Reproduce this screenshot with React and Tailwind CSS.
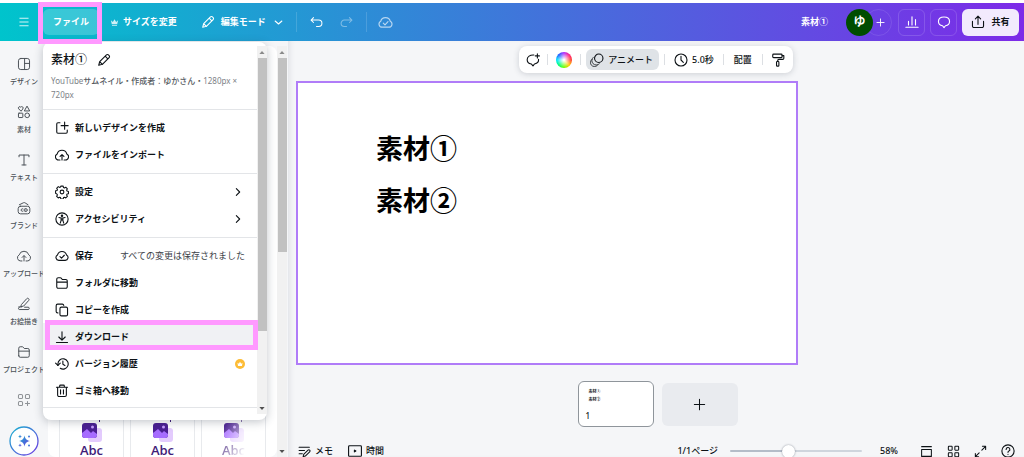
import { useState } from 'react';

function Icon({ children, className = 'size-[14px]', strokeWidth = 1.9 }) {
  return (
    <svg
      viewBox="0 0 24 24"
      fill="none"
      stroke="currentColor"
      strokeWidth={strokeWidth}
      strokeLinecap="round"
      strokeLinejoin="round"
      aria-hidden="true"
      className={`shrink-0 ${className}`}
    >
      {children}
    </svg>
  );
}

const cloud = 'M6.5 19.5a5 5 0 0 1-2.2-9.4 8 8 0 0 1 15.4 0 5 5 0 0 1-2.2 9.4z';

const icons = {
  pencil: <path d="M3 21l1.6-6.2L16.2 3.2a2.4 2.4 0 0 1 3.4 0l1.2 1.2a2.4 2.4 0 0 1 0 3.4L9.2 19.4zM14 5.5l4.5 4.5M4.6 14.8l4.6 4.6" />,
  cloudCheck: (
    <>
      <path d={cloud} />
      <path d="M8.5 13l2.7 2.7 4.8-5" />
    </>
  ),
  cloudUp: (
    <>
      <path d="M8.5 20.5h-2a5.500 5.500 0 0 1-2.700-10.400 8.500 8.500 0 0 1 16.400 0 5.500 5.500 0 0 1-2.700 10.400h-2" />
      <path d="M12 20.5v-8.500M8.7 14.5l3.3-3.3 3.3 3.3" />
    </>
  ),
  newDesign: <path d="M8.5 3H5a2 2 0 0 0-2 2v14a2 2 0 0 0 2 2h14a2 2 0 0 0 2-2v-3.500M16.500 2v12M10.500 8h12" />,
  gear: (
    <>
      <circle cx="12" cy="12" r="3.2" />
      <path d="M9.900 1.500h4.200l.6 2.600 1.700.7 2.300-1.400 2.900 2.900-1.400 2.300.7 1.700 2.600.6v4.200l-2.600.6-.7 1.700 1.400 2.300-2.900 2.900-2.300-1.400-1.700.7-.6 2.600H9.900l-.6-2.600-1.700-.7-2.300 1.400-2.900-2.900 1.400-2.300-.7-1.700L.5 14.100V9.900l2.600-.6.7-1.700-1.400-2.300 2.900-2.900 2.300 1.400 1.700-.7z" transform="translate(.5 .5) scale(.96)" />
    </>
  ),
  accessibility: (
    <>
      <circle cx="12" cy="12" r="10.500" />
      <circle cx="12" cy="6.500" r="1.200" fill="currentColor" />
      <path d="M6.800 9.500l3.700.8h3l3.700-.8M10.500 10.300v4L9 19M13.500 10.300v4L15 19M10.500 13.500h3" />
    </>
  ),
  folder: <path d="M3 18.500V5.500a2.500 2.500 0 0 1 2.500-2.500h3.600a2 2 0 0 1 1.500.7L12.500 6h6A2.500 2.500 0 0 1 21 8.500v10a2.500 2.500 0 0 1-2.500 2.500h-13A2.500 2.500 0 0 1 3 18.500zM3 10.500h18" />,
  copy: (
    <>
      <rect x="8.500" y="7" width="13" height="15" rx="2.500" />
      <path d="M5 17H4.500A2.500 2.500 0 0 1 2 14.500v-10A2.500 2.500 0 0 1 4.500 2h8A2.500 2.500 0 0 1 15 4" />
    </>
  ),
  download: <path d="M12 3v14M6.500 12l5.500 5.500 5.500-5.500M2.500 21.500h19" />,
  history: (
    <>
      <path d="M5 14.500V12a8.800 8.800 0 1 1 4 7.300" />
      <path d="M1 10.500l4 4 4-4M13.500 7v5.500l3.500 2" />
    </>
  ),
  trash: <path d="M2.500 5.500h19M8 5V3.500A1.500 1.500 0 0 1 9.500 2h5A1.500 1.500 0 0 1 16 3.500V5M4.500 6v13A2.500 2.500 0 0 0 7 21.500h10a2.500 2.500 0 0 0 2.500-2.500V6M9.500 10v7M14.500 10v7" />,
  right: <path d="M8 4l8 8-8 8" />,
  down: <path d="M3 8l9 8 9-8" />,
  design: (
    <>
      <rect x="2.500" y="2.500" width="19" height="19" rx="4" />
      <path d="M13 2.500v19M13 11h8.500" />
    </>
  ),
  elements: (
    <>
      <path d="M6.500 10.200L2.800 6.500a2.200 2.200 0 0 1 3.700-2.700 2.200 2.200 0 0 1 3.700 2.700z" />
      <path d="M17.500 2.500l4.300 7.700h-8.600z" />
      <rect x="2.500" y="14" width="7.500" height="7.500" rx="1" />
      <circle cx="17.500" cy="17.700" r="4" />
    </>
  ),
  text: <path d="M3.500 6.500V3.500h17v3M12 3.500v17M8.500 20.500h7" />,
  brand: (
    <>
      <rect x="2" y="9" width="20" height="13" rx="4" />
      <path d="M4 6.500l7-3.500a3 3 0 0 1 3 .3l5 3.200M10.500 13.700a2.200 2.200 0 1 0 0 3.600M14 13.300h1.500a2.200 2.200 0 0 1 0 4.400H14z" />
    </>
  ),
  draw: <path d="M8 12.500L16.500 3a2.300 2.300 0 0 1 3.500 3l-8.500 9.500-4.500 1zM3 17H8M4 17.500c-2 0-2 4 0 4h15a2 2 0 0 0 0-4h-6" />,
  apps: (
    <>
      <rect x="2.500" y="2.500" width="7" height="7" rx="2" />
      <rect x="14.500" y="2.500" width="7" height="7" rx="2" />
      <rect x="2.500" y="14.500" width="7" height="7" rx="2" />
      <path d="M18 14.500v7M14.500 18h7" />
    </>
  ),
  grid: (
    <>
      <rect x="2.500" y="2.500" width="7" height="7" rx="1" />
      <rect x="14.500" y="2.500" width="7" height="7" rx="1" />
      <rect x="2.500" y="14.500" width="7" height="7" rx="1" />
      <rect x="14.500" y="14.500" width="7" height="7" rx="1" />
    </>
  ),
  undo: <path d="M6.500 3L2 7.500 6.500 12M2.500 7.500H16a6 6 0 0 1 0 12h-4" />,
  redo: <path d="M17.500 3L22 7.500 17.500 12M21.500 7.500H8a6 6 0 0 0 0 12h4" />,
  menu: <path d="M2 3h20M2 12h20M2 21h20" />,
  chart: <path d="M1.500 21h21M6 17v-6M12 17V3M18 17V8" />,
  bubble: <path d="M12 3.500c5.500 0 9.500 3 9.500 7.500 0 4.200-3 6.800-7 7.400L12 21.500l-2.500-3.100c-4-.6-7-3.200-7-7.400 0-4.500 4-7.500 9.500-7.500z" />,
  addComment: <path d="M13.500 3.500C7 3 2 6.200 2 11.500c0 4 3 6.500 7 7.300l3 3.200 2.500-3.200c4.500-.8 7.500-4 7-8M19.500 1.500v7M16 5h7" />,
  share: <path d="M12 16V2.500M7.500 6.500L12 2l4.500 4.500M2.500 11v8a2.500 2.500 0 0 0 2.500 2.500h14a2.500 2.500 0 0 0 2.500-2.500v-8" />,
  plus: <path d="M12 2.500v19M2.500 12h19" />,
  animate: (
    <>
      <circle cx="15" cy="9" r="7.200" />
      <path d="M5.500 7.500a7.500 7.500 0 0 0 10.500 11M3 11a7 7 0 0 0 9.500 10.500" strokeWidth="1.300" />
    </>
  ),
  clock: (
    <>
      <circle cx="12" cy="12" r="10.300" />
      <path d="M12 5.500V12l4 4" />
    </>
  ),
  roller: (
    <>
      <rect x="3" y="2" width="16" height="6" rx="1.500" />
      <path d="M19 4.500h3V9a2 2 0 0 1-2 2h-6.500a2 2 0 0 0-2 2v1.500" />
      <rect x="9.500" y="14.500" width="4" height="8" rx="1.200" />
    </>
  ),
  memo: <path d="M2 4h19M2 10h10M2 16h6M9.500 21.500l1-4 8-8a2 2 0 0 1 3 3l-8 8z" />,
  play: (
    <>
      <rect x="1" y="3" width="22" height="18" rx="1.500" />
      <path d="M11 10.500l2.500 1.500-2.500 1.500z" fill="currentColor" />
    </>
  ),
  page: <path d="M3 3h18M3 8.500h18V21H3z" />,
  expand: <path d="M14.500 9.500L21.500 2.500M15.500 2.500h6v6M9.500 14.500l-7 7M2.500 15.500v6h6" />,
  help: (
    <>
      <circle cx="12" cy="12" r="10.500" />
      <path d="M8.800 9.300a3.200 3.200 0 1 1 4.700 2.800c-1 .5-1.500 1-1.500 2.200M12 17.500v.2" />
    </>
  ),
};

const navItems = [
  { icon: 'design', label: 'デザイン' },
  { icon: 'elements', label: '素材' },
  { icon: 'text', label: 'テキスト' },
  { icon: 'brand', label: 'ブランド' },
  { icon: 'cloudUp', label: 'アップロード' },
  { icon: 'draw', label: 'お絵描き' },
  { icon: 'folder', label: 'プロジェクト' },
];

const menuSections = [
  [
    { icon: 'newDesign', label: '新しいデザインを作成' },
    { icon: 'cloudUp', label: 'ファイルをインポート' },
  ],
  [
    { icon: 'gear', label: '設定', submenu: true },
    { icon: 'accessibility', label: 'アクセシビリティ', submenu: true },
  ],
  [
    { icon: 'cloudCheck', label: '保存', note: 'すべての変更は保存されました' },
    { icon: 'folder', label: 'フォルダに移動' },
    { icon: 'copy', label: 'コピーを作成' },
    { icon: 'download', label: 'ダウンロード', highlight: true },
    { icon: 'history', label: 'バージョン履歴', premium: true },
    { icon: 'trash', label: 'ゴミ箱へ移動' },
  ],
];

function Scrollbar({ thumb }) {
  return (
    <div className="flex w-[10px] shrink-0 flex-col items-center justify-between bg-[#f1f1f1]" aria-hidden="true">
      <div className="flex w-full flex-1 flex-col items-center">
        <svg viewBox="0 0 10 12" className="h-3 w-[10px] shrink-0 fill-[#8a8a8a]">
          <path d="M5 5l2.600 3H2.400z" />
        </svg>
        <div className={`w-[9px] bg-[#c1c1c1] ${thumb}`} />
      </div>
      <svg viewBox="0 0 10 12" className="h-3 w-[10px] shrink-0 fill-[#505050]">
        <path d="M5 8L2.400 5h5.200z" />
      </svg>
    </div>
  );
}

function MenuItem({ item }) {
  return (
    <button
      type="button"
      className={`relative flex h-[27px] w-full items-center gap-1.5 px-3 text-[9px] font-bold ${item.highlight ? 'bg-[#f0f1f4]' : ''}`}
    >
      <Icon>{icons[item.icon]}</Icon>
      <span>{item.label}</span>
      {item.note && <span className="ml-auto font-normal text-[#3c4248]">{item.note}</span>}
      {item.submenu && <Icon className="ml-auto mr-0.5 size-[10px]" strokeWidth={2.6}>{icons.right}</Icon>}
      {item.premium && (
        <svg viewBox="0 0 10 10" className="ml-auto size-[10px]" aria-hidden="true">
          <circle cx="5" cy="5" r="5" fill="#fdbc35" />
          <path d="M2.500 3.800l1.300 1L5 2.800l1.200 2 1.300-1L7 7H3z" fill="#fff" />
        </svg>
      )}
      {item.highlight && (
        <span className="absolute -right-px -top-[3px] bottom-0 left-0.5 border-[5px] border-[#ff99ff]" />
      )}
    </button>
  );
}

function FileMenu() {
  return (
    <div className="absolute left-0 top-[33px] z-20 flex w-[224px] rounded-lg bg-white pb-1.5 pt-1 text-[#0d1216] shadow-[0_2px_10px_rgba(40,50,70,0.28)]">
      <div className="flex-1 pb-1.5">
        <div className="px-2 pb-[7px] pt-1.5">
          <div className="flex items-center gap-2.5">
            <h2 className="text-[12px] font-medium leading-4">素材①</h2>
            <button type="button" aria-label="名前を変更">
              <Icon>{icons.pencil}</Icon>
            </button>
          </div>
          <p className="mt-1.5 text-[8px] font-normal leading-[14px] text-[#7d8287]">
            <span>YouTube</span>
            <span className="font-medium text-[#54595e]">サムネイル・作成者：ゆかさん・</span>
            <span>1280px ×</span> <span>720px</span>
          </p>
        </div>
        {menuSections.map((section, i) => (
          <div key={i} className="border-t border-[#e3e5e8] pb-[5px] pt-1">
            {section.map((item) => (
              <MenuItem key={item.label} item={item} />
            ))}
          </div>
        ))}
        <hr className="-mt-0.5 border-[#e3e5e8]" />
      </div>
      <Scrollbar thumb="h-[273px]" />
    </div>
  );
}

function Header() {
  return (
    <header className="mt-[3px] flex h-[38px] shrink-0 items-center bg-linear-to-r/srgb from-[#00c4cc] to-[#7d2ae8] pr-[5px] text-[9px] font-bold text-white">
      <button type="button" aria-label="メニュー" className="flex w-[43px] justify-center pl-1">
        <Icon className="size-[10px]" strokeWidth={2}>{icons.menu}</Icon>
      </button>
      <div className="relative">
        <button type="button" className="h-[26px] w-[56px] rounded-md bg-white/20">ファイル</button>
        <FileMenu />
        <div className="pointer-events-none absolute -bottom-[9px] -left-[5px] -right-[3px] -top-[7px] z-30 border-[5px] border-[#ff99ff]" />
      </div>
      <button type="button" className="ml-[11px] flex items-center gap-1">
        <svg viewBox="0 0 10 10" className="size-[9px] fill-white/80" aria-hidden="true">
          <path d="M1 2.500l2.200 2L5 1.500l1.800 3 2.200-2L8 7H2zM2.200 8h5.600v1H2.200z" />
        </svg>
        サイズを変更
      </button>
      <button type="button" className="ml-6 flex items-center gap-1.5">
        <Icon>{icons.pencil}</Icon>
        編集モード
        <Icon className="ml-0.5 size-[9px]" strokeWidth={2.8}>{icons.down}</Icon>
      </button>
      <span className="ml-[13px] h-5 w-px bg-white/15" />
      <button type="button" aria-label="元に戻す" className="ml-[13px]"><Icon className="size-[13px]">{icons.undo}</Icon></button>
      <button type="button" aria-label="やり直す" className="ml-[17px] opacity-40"><Icon className="size-[13px]">{icons.redo}</Icon></button>
      <span className="ml-[13px] h-5 w-px bg-white/15" />
      <button type="button" aria-label="保存状態" className="ml-[11px] opacity-65"><Icon className="size-[15px]">{icons.cloudCheck}</Icon></button>

      <span className="ml-auto mr-[18px]">素材①</span>
      <div className="z-10 flex size-[27px] items-center justify-center rounded-full bg-[#004d00] text-[12px]">ゆ</div>
      <button type="button" aria-label="メンバーを追加" className="-ml-2 mr-1.5 flex size-[27px] items-center justify-center rounded-full border border-white/10 pl-1">
        <Icon className="size-[9px]" strokeWidth={2.4}>{icons.plus}</Icon>
      </button>
      <div className="flex gap-[5px]">
        <button type="button" aria-label="分析" className="flex size-[27px] items-center justify-center rounded-md border border-white/15">
          <Icon>{icons.chart}</Icon>
        </button>
        <button type="button" aria-label="コメント" className="flex size-[27px] items-center justify-center rounded-md border border-white/15">
          <Icon>{icons.bubble}</Icon>
        </button>
        <button type="button" className="flex h-[27px] w-[57px] items-center justify-center gap-1.5 rounded-md bg-[#f2eafd] text-[#0d1216]">
          <Icon>{icons.share}</Icon>
          共有
        </button>
      </div>
    </header>
  );
}

function SideNav() {
  return (
    <nav className="flex w-12 shrink-0 flex-col items-center pt-4 text-[#4b5157]">
      {navItems.map((item) => (
        <button key={item.label} type="button" className="flex h-12 w-full shrink-0 flex-col items-center gap-1.5 whitespace-nowrap text-[7px] font-medium leading-[10px]">
          <Icon strokeWidth={1.7}>{icons[item.icon]}</Icon>
          {item.label}
        </button>
      ))}
      <button type="button" aria-label="アプリ" className="flex h-[33px] shrink-0 items-start opacity-60">
        <Icon strokeWidth={1.8}>{icons.apps}</Icon>
      </button>
      <button type="button" aria-label="AIアシスタント" className="shrink-0">
        <svg viewBox="0 0 30 30" className="size-[30px]" aria-hidden="true">
          <defs>
            <linearGradient id="ai" x1="0" y1="0" x2="1" y2="1">
              <stop offset="0" stopColor="#16b5cf" />
              <stop offset="1" stopColor="#6d35e2" />
            </linearGradient>
          </defs>
          <circle cx="15" cy="15" r="14" fill="#fff" stroke="url(#ai)" strokeWidth="1.300" />
          <path d="M15.500 9.500c.8 3.600 1.900 4.700 5.500 5.500-3.600.8-4.700 1.900-5.500 5.500-.8-3.600-1.900-4.700-5.500-5.500 3.600-.8 4.700-1.900 5.500-5.500z" fill="url(#ai)" />
          <path d="M11 8.500l.6 1.400 1.400.6-1.400.6L11 12.500l-.6-1.400-1.400-.6 1.400-.6zM11 17.500l.5 1.300 1.300.5-1.300.5-.5 1.300-.5-1.300-1.300-.5 1.300-.5z" fill="url(#ai)" />
          <circle cx="20" cy="10.500" r="1" fill="url(#ai)" />
          <circle cx="20" cy="19.500" r="1" fill="url(#ai)" />
        </svg>
      </button>
    </nav>
  );
}

function TextStyleCard({ faded }) {
  return (
    <button type="button" className="flex h-14 flex-col items-center justify-end border-x border-[#e8eaed] text-[#3f1c78]">
      <span className={`flex flex-col items-center ${faded ? 'mask-[linear-gradient(to_right_bottom,#000_10%,transparent_95%)]' : ''}`}>
        <svg viewBox="0 0 22 23" className="h-[23px] w-[22px]" aria-hidden="true">
          <path d="M18.500 0v2" stroke="#3f1c78" />
          <rect x="7" y="8" width="14" height="14" rx="3" fill="#e3cbfd" />
          <rect x="1" y="3" width="15" height="15" rx="3" fill="#4a1f92" />
          <path d="M1 13l5-4 4 4 2-2 4 3v1a3 3 0 0 1-3 3H4a3 3 0 0 1-3-3z" fill="#a66cff" />
          <circle cx="11.500" cy="7" r="1.500" fill="#c79eff" />
        </svg>
        <span className="font-['Open_Sans',sans-serif] text-[13px] font-semibold leading-[14px]">Abc</span>
      </span>
    </button>
  );
}

function SidePanel() {
  return (
    <aside className="flex w-60 shrink-0 pt-[5px]">
      <div className="flex flex-1 flex-col justify-end rounded-lg bg-white px-[11px]">
        <div className="grid grid-cols-3 gap-1.5">
          <TextStyleCard />
          <TextStyleCard />
          <TextStyleCard faded />
        </div>
      </div>
      <Scrollbar thumb="h-[194px]" />
      <div className="w-px" />
    </aside>
  );
}

function Divider() {
  return <span className="h-[11px] w-px bg-[#dcdfe3]" />;
}

function Toolbar() {
  return (
    <div className="mx-auto flex h-[27px] w-fit shrink-0 items-center rounded-lg bg-white text-[9px] font-medium shadow-[0_1px_6px_rgba(40,50,70,0.2)]">
      <button type="button" aria-label="コメントを追加" className="px-[7px]"><Icon>{icons.addComment}</Icon></button>
      <Divider />
      <button type="button" aria-label="背景色" className="px-2">
        <span className="block size-4 rounded-full bg-[radial-gradient(circle,#fff_5%,transparent_65%),conic-gradient(#b030ff,#ff2080,#ff4030,#ffd000,#70ff00,#00ff70,#00e5ff,#2060ff,#b030ff)]" />
      </button>
      <Divider />
      <button type="button" className="mx-[5px] flex h-[21px] items-center gap-1 rounded-md bg-[#dfe3e7] pl-1 pr-1.5">
        <Icon>{icons.animate}</Icon>
        アニメート
      </button>
      <Divider />
      <button type="button" className="flex items-center gap-1 px-[9px]">
        <Icon>{icons.clock}</Icon>
        5.0秒
      </button>
      <Divider />
      <button type="button" className="px-[10px]">配置</button>
      <Divider />
      <button type="button" aria-label="スタイルをコピー" className="px-2"><Icon>{icons.roller}</Icon></button>
    </div>
  );
}

function Footer() {
  const [zoom, setZoom] = useState(44);
  return (
    <footer className="mt-3 flex h-6 shrink-0 items-center pl-2.5 pr-[9px] text-[9px] font-medium">
      <button type="button" className="flex items-center gap-1">
        <Icon className="size-[13px]">{icons.memo}</Icon>
        メモ
      </button>
      <button type="button" className="ml-[15px] flex items-center gap-1">
        <Icon>{icons.play}</Icon>
        時間
      </button>
      <span className="ml-auto">1/1ページ</span>
      <input
        type="range"
        aria-label="ズーム"
        value={zoom}
        onChange={(e) => setZoom(Number(e.target.value))}
        className="ml-3 h-[2px] w-[132px] appearance-none rounded-full bg-[linear-gradient(to_right,#b4bcc8_45%,#cfd5dd_45%)] [&::-webkit-slider-thumb]:size-[13px] [&::-webkit-slider-thumb]:appearance-none [&::-webkit-slider-thumb]:rounded-full [&::-webkit-slider-thumb]:bg-white [&::-webkit-slider-thumb]:shadow-[0_0_2px_rgba(30,40,60,0.5)]"
      />
      <span className="ml-[18px] mr-[22px]">58%</span>
      <div className="flex items-center gap-[14px]">
        <button type="button" aria-label="ページを表示"><Icon className="size-[13px]">{icons.page}</Icon></button>
        <button type="button" aria-label="グリッド表示"><Icon className="size-[13px]">{icons.grid}</Icon></button>
        <button type="button" aria-label="全画面"><Icon className="size-[13px]">{icons.expand}</Icon></button>
        <button type="button" aria-label="ヘルプ"><Icon>{icons.help}</Icon></button>
      </div>
    </footer>
  );
}

export default function App() {
  return (
    <div className="flex h-screen flex-col overflow-hidden bg-white font-['Noto_Sans','Noto_Sans_CJK_JP',sans-serif] text-[#0d1216]">
      <Header />
      <div className="flex min-h-0 flex-1 bg-[#f5f6f8]">
        <SideNav />
        <SidePanel />
        <main className="flex min-w-0 flex-1 flex-col pt-[5px] shadow-[inset_5px_0_6px_-4px_rgba(40,50,70,0.12)]">
          <Toolbar />
          <section className="ml-2 mt-2 aspect-[502/284] w-[502px] shrink-0 border-2 border-[#b07cf8] bg-white pl-[78px] pt-[47px] text-[27px] font-bold leading-[38px] text-black">
            <p>素材①</p>
            <p className="mt-3.5">素材②</p>
          </section>
          <div className="mt-4 flex shrink-0 items-center justify-center gap-2 pl-[3px]">
            <button type="button" className="flex h-[46px] w-[76px] flex-col items-start rounded-md border border-[#8f959b] bg-white pl-2.5 pt-1.5 text-[4px] font-bold leading-2">
              <span>素材①</span>
              <span>素材②</span>
              <span className="-ml-[3px] mt-1.5 text-[8px] font-medium leading-[11px]">1</span>
            </button>
            <button type="button" aria-label="ページを追加" className="flex h-[43px] w-[76px] items-center justify-center rounded-md bg-[#e9ebef]">
              <Icon className="size-[13px]">{icons.plus}</Icon>
            </button>
          </div>
          <Footer />
        </main>
      </div>
    </div>
  );
}
